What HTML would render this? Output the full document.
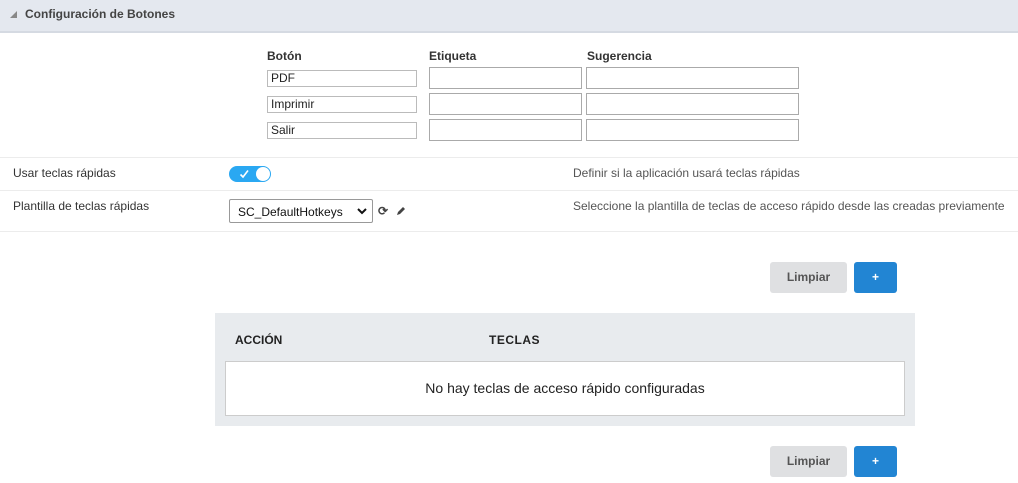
<!DOCTYPE html>
<html><head><meta charset="utf-8"><style>
*{box-sizing:border-box;margin:0;padding:0}
body{width:1018px;height:483px;background:#fff;font-family:"Liberation Sans",Arial,sans-serif;color:#333;position:relative;overflow:hidden;font-size:12px}
.a{position:absolute}
.hdr{left:0;top:0;width:1018px;height:33px;background:#e4e8ef;border-bottom:2px solid #d5dae2}
.inp{position:absolute;border:1px solid #aaa;background:#fff;font-size:12px;padding:2px 4px;color:#222}
.line{left:0;width:1018px;height:1px;background:#ececec}
.btn{position:absolute;border-radius:3px;font-size:12px;font-weight:bold;text-align:center;line-height:31px;height:31px}
</style></head><body>
<div class="a hdr"></div>
<div class="a" style="left:10px;top:11px;width:0;height:0;border-left:7px solid transparent;border-bottom:7px solid #888"></div>
<div class="a" style="left:25px;top:7px;font-size:12px;font-weight:bold;color:#444">Configuración de Botones</div>

<div class="a" style="left:267px;top:49px;font-weight:bold">Botón</div>
<div class="a" style="left:429px;top:49px;font-weight:bold">Etiqueta</div>
<div class="a" style="left:587px;top:49px;font-weight:bold">Sugerencia</div>

<div class="inp" style="left:267px;top:70px;width:150px;height:17px;padding:0 3px;line-height:15px;border-color:#bbb">PDF</div>
<div class="inp" style="left:267px;top:96px;width:150px;height:17px;padding:0 3px;line-height:15px;border-color:#bbb">Imprimir</div>
<div class="inp" style="left:267px;top:122px;width:150px;height:17px;padding:0 3px;line-height:15px;border-color:#bbb">Salir</div>
<div class="inp" style="left:429px;top:67px;width:153px;height:22px"></div>
<div class="inp" style="left:429px;top:93px;width:153px;height:22px"></div>
<div class="inp" style="left:429px;top:119px;width:153px;height:22px"></div>
<div class="inp" style="left:586px;top:67px;width:213px;height:22px"></div>
<div class="inp" style="left:586px;top:93px;width:213px;height:22px"></div>
<div class="inp" style="left:586px;top:119px;width:213px;height:22px"></div>

<div class="a line" style="top:157px"></div>
<div class="a" style="left:13px;top:166px">Usar teclas rápidas</div>
<div class="a" style="left:229px;top:166px;width:42px;height:16px;border-radius:8px;background:#2aa8f2"></div>
<svg class="a" style="left:239px;top:169px" width="10" height="10" viewBox="0 0 10 10"><path d="M1.5 5.5l2.5 2.5 5-6.5" stroke="#fff" stroke-width="1.6" fill="none"/></svg>
<div class="a" style="left:256px;top:167px;width:14px;height:14px;border-radius:50%;background:#fff"></div>
<div class="a" style="left:573px;top:166px;color:#555">Definir si la aplicación usará teclas rápidas</div>

<div class="a line" style="top:190px"></div>
<div class="a" style="left:13px;top:199px">Plantilla de teclas rápidas</div>
<div class="a" style="left:229px;top:199px;width:144px;height:24px;border:1px solid #999;border-radius:2px;padding:5px 8px;font-size:12px;color:#111">SC_DefaultHotkeys</div>
<svg class="a" style="left:357px;top:207px" width="10" height="8" viewBox="0 0 10 8"><path d="M1 2l4 4 4-4" stroke="#111" stroke-width="2" fill="none"/></svg>
<div class="a" style="left:378px;top:204px;font-size:12px;font-weight:bold;color:#444">⟳</div>
<svg class="a" style="left:396px;top:206px" width="10" height="10" viewBox="0 0 10 10"><path d="M1 9l1-3 5-5 2 2-5 5z" fill="#444"/></svg>
<div class="a" style="left:573px;top:199px;color:#555">Seleccione la plantilla de teclas de acceso rápido desde las creadas previamente</div>
<div class="a line" style="top:231px"></div>

<div class="btn" style="left:770px;top:262px;width:77px;background:#dfe0e2;color:#555">Limpiar</div>
<div class="btn" style="left:854px;top:262px;width:43px;background:#2285d3;color:#fff">+</div>

<div class="a" style="left:215px;top:313px;width:700px;height:113px;background:#e8ebee"></div>
<div class="a" style="left:235px;top:333px;font-weight:bold;color:#222">ACCIÓN</div>
<div class="a" style="left:489px;top:333px;font-weight:bold;color:#222;letter-spacing:.5px">TECLAS</div>
<div class="a" style="left:225px;top:361px;width:680px;height:55px;background:#fff;border:1px solid #ccc;text-align:center;line-height:53px;font-size:14px;color:#222">No hay teclas de acceso rápido configuradas</div>

<div class="btn" style="left:770px;top:446px;width:77px;background:#dfe0e2;color:#555">Limpiar</div>
<div class="btn" style="left:854px;top:446px;width:43px;background:#2285d3;color:#fff">+</div>
</body></html>
